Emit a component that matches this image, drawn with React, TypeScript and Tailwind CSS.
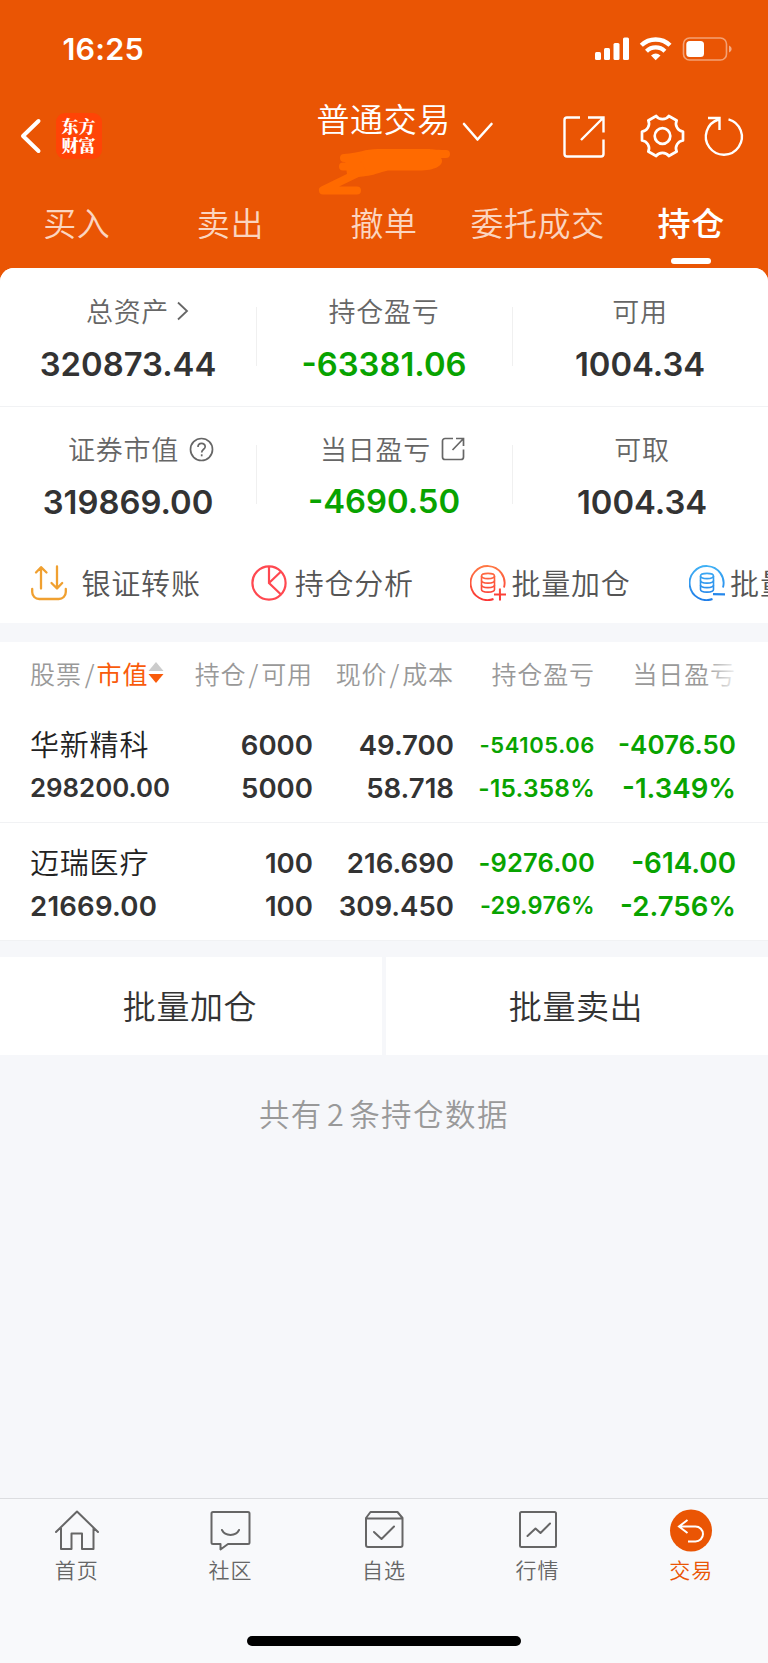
import type { ReactNode } from "react";

const CJK = "font-['Noto_Sans_CJK_SC',sans-serif]";
const NUM = "font-['Inter','Noto_Sans_CJK_SC',sans-serif]";
const LOGO = "font-['Noto_Serif_CJK_SC','Noto_Sans_CJK_SC',sans-serif]";

const tabs = ["买入", "卖出", "撤单", "委托成交", "持仓"];

interface Holding {
    name: string;
    value: string;
    valueClass: string;
    amount: string;
    available: string;
    price: string;
    cost: string;
    profit: string;
    profitRate: string;
    profitClass: string;
    profitRateClass: string;
    dayProfit: string;
    dayRate: string;
    dayProfitClass: string;
}

const holdings: Holding[] = [
    {
        name: "华新精科",
        value: "298200.00",
        valueClass: "text-[25.8px]",
        amount: "6000",
        available: "5000",
        price: "49.700",
        cost: "58.718",
        profit: "-54105.06",
        profitRate: "-15.358%",
        profitClass: "text-[22px] tracking-[0.6px]",
        profitRateClass: "text-[24.5px] tracking-[0.2px]",
        dayProfit: "-4076.50",
        dayRate: "-1.349%",
        dayProfitClass: "text-[26px]",
    },
    {
        name: "迈瑞医疗",
        value: "21669.00",
        valueClass: "text-[27.6px] tracking-[0.2px]",
        amount: "100",
        available: "100",
        price: "216.690",
        cost: "309.450",
        profit: "-9276.00",
        profitRate: "-29.976%",
        profitClass: "text-[25.5px] tracking-[0.2px]",
        profitRateClass: "text-[23.6px] tracking-[0.2px]",
        dayProfit: "-614.00",
        dayRate: "-2.756%",
        dayProfitClass: "text-[27.8px]",
    },
];

function StatusBar() {
    return (
        <div className="flex h-[98px] items-center justify-between pr-[36px] pl-[62.5px] text-white">
            <span className={`${NUM} text-[30.5px] leading-[40px] font-semibold tracking-[0.2px]`}>16:25</span>
            <svg width="137" height="24" viewBox="595 37 137 24" fill="none">
                <rect x="595" y="52" width="6" height="8" rx="1.5" fill="#fff" />
                <rect x="604" y="48" width="6" height="12" rx="1.5" fill="#fff" />
                <rect x="613.5" y="43" width="6" height="17" rx="1.5" fill="#fff" />
                <rect x="623" y="37.5" width="6" height="22.5" rx="1.5" fill="#fff" />
                <path d="M641.3 45.3a20.5 20.5 0 0 1 28.7 0" stroke="#fff" strokeWidth="4.4" />
                <path d="M646.5 51.2a13 13 0 0 1 18.4 0" stroke="#fff" strokeWidth="4.2" />
                <path d="M651 55.5a7.5 7.5 0 0 1 9.5 0L655.7 60.3Z" fill="#fff" />
                <rect x="683.5" y="38" width="43" height="22" rx="6" stroke="#fff" strokeOpacity=".45" strokeWidth="1.6" />
                <rect x="686.3" y="41" width="17.7" height="16" rx="3.5" fill="#fff" />
                <path d="M729 45.5c3.5 1.5 3.5 5.5 0 7Z" fill="#fff" fillOpacity=".5" />
            </svg>
        </div>
    );
}

function NavBar() {
    return (
        <div className="relative flex h-[88px] items-start text-white">
            <svg className="mt-[20px] ml-[20px]" width="22" height="36" viewBox="0 0 22 36" fill="none">
                <path d="M18.5 3L3 18L18.5 33" stroke="#fff" strokeWidth="4" strokeLinecap="round" strokeLinejoin="round" />
            </svg>
            <div className="mt-[15px] ml-[13.5px] flex h-[46px] w-[46px] flex-col items-center justify-center rounded-[9px] bg-[#ff4406] pb-[3px]">
                <span className={`${LOGO} text-[17px] leading-[19px] font-black`}>东方</span>
                <span className={`${LOGO} text-[17px] leading-[19px] font-black`}>财富</span>
            </div>
            <span className={`${CJK} ml-[215px] text-[33px] leading-[40px] font-[350] tracking-[0.6px] whitespace-nowrap`}>普通交易</span>
            <svg className="mt-[23px] ml-[10px]" width="34" height="22" viewBox="0 0 34 22" fill="none">
                <path d="M3 3L16.5 18.5L30.5 3" stroke="#fff" strokeWidth="2.6" strokeLinecap="round" strokeLinejoin="round" />
            </svg>
            <svg className="mt-[14px] ml-auto" width="212" height="48" viewBox="556 112 212 48" fill="none" stroke="#fff" strokeWidth="2.4">
                <path d="M580 117.5H567a2.5 2.5 0 0 0-2.5 2.5V154a2.5 2.5 0 0 0 2.5 2.5H601a2.5 2.500 0 0 0 2.500-2.500V139.500M588 117.500H603.500V132.500M603.500 117.500L581 140" />
                <g transform="translate(662.5 136)" strokeWidth="2.7">
                    <circle r="7.8" />
                    <path
                        d="M-6.3 -20C-3.5 -15.8 3.5 -15.8 6.3 -20L14.2 -15.5C11.9 -10.9 15.4 -4.9 20.5 -4.5L20.5 4.5C15.4 4.9 11.9 10.9 14.2 15.5L6.3 20C3.5 15.8 -3.5 15.8 -6.3 20L-14.2 15.5C-11.9 10.9 -15.4 4.9 -20.5 4.5L-20.5 -4.5C-15.4 -4.9 -11.9 -10.9 -14.2 -15.5Z"
                        strokeLinejoin="round"
                    />
                </g>
                <path d="M728.5 119.3A18 18 0 1 1 718.5 119.5M708 118H719.5V130" />
            </svg>
            {/* highlighter scribble hiding the account number */}
            <svg className="absolute top-[50px] left-[316px]" width="138" height="50" viewBox="316 148 138 50" fill="none">
                <path d="M344 154C360 153 364 149 378 149H428C432 149 434 150 446 150A4 4 0 0 1 446 158H441C445 164 437 170 422 170.5H388C380 172 372 176 366 176C358 177 350 179 347 174Z" fill="#ff6a00" />
                <path d="M344 158H360M343 166.5H360M323 190L362 171M323 190.5H357" stroke="#ff6a00" strokeWidth="8" strokeLinecap="round" />
            </svg>
        </div>
    );
}

function TabBar() {
    return (
        <div className="grid h-[82px] grid-cols-5">
            {tabs.map((tab) => {
                const active = tab === "持仓";
                return (
                    <div key={tab} className="flex flex-col items-center pt-[16px]">
                        <span
                            className={`${CJK} text-[33px] leading-[40px] tracking-[0.6px] whitespace-nowrap ${active ? "font-medium text-white" : "font-[350] text-[#fbd5c0]"}`}
                        >
                            {tab}
                        </span>
                        {active && <span className="mt-[16px] h-[6px] w-[40px] rounded-full bg-white" />}
                    </div>
                );
            })}
        </div>
    );
}

interface StatProps {
    label: string;
    value: string;
    green?: boolean;
    divider?: boolean;
    className?: string;
    valueClass?: string;
    icon?: ReactNode;
}

function Stat({ label, value, green, divider, className = "", valueClass = "mt-[13px]", icon }: StatProps) {
    return (
        <div className="relative flex flex-col items-center">
            <div className={`flex h-[40px] items-center ${className}`}>
                <span className={`${CJK} text-[27px] leading-[40px] font-[350] tracking-[0.7px] whitespace-nowrap text-[#666]`}>{label}</span>
                {icon}
            </div>
            <span className={`${NUM} text-[32.8px] leading-[40px] font-semibold ${valueClass} ${green ? "text-[#08a300]" : "text-[#333]"}`}>{value}</span>
            {divider && <span className="absolute top-[16px] -right-px h-[59px] w-px bg-[#f0f0f0]" />}
        </div>
    );
}

function Summary() {
    return (
        <div>
            <div className="grid h-[139px] grid-cols-3 border-b border-[#f1f2f4] pt-[23px]">
                <Stat
                    label="总资产"
                    value="320873.44"
                    divider
                    className="pl-[20px]"
                    icon={
                        <svg className="ml-[7px]" width="14" height="22" viewBox="0 0 14 22" fill="none">
                            <path d="M2 2.5L11 11L2 19.5" stroke="#666" strokeWidth="1.8" />
                        </svg>
                    }
                />
                <Stat label="持仓盈亏" value="-63381.06" green divider />
                <Stat label="可用" value="1004.34" />
            </div>
            <div className="grid h-[137px] grid-cols-3 pt-[22px]">
                <Stat
                    label="证券市值"
                    value="319869.00"
                    divider
                    className="pl-[26px]"
                    icon={
                        <svg className="ml-[10px]" width="25" height="25" viewBox="0 0 25 25" fill="none" stroke="#666" strokeWidth="1.7">
                            <circle cx="12.5" cy="12.5" r="11" />
                            <path d="M9 10C9 5.3 16.2 5.3 16.2 9.7C16.2 12.3 12.7 12.3 12.7 15.5" />
                            <path d="M12.7 17.3V19.3" />
                        </svg>
                    }
                />
                <Stat
                    label="当日盈亏"
                    value="-4690.50"
                    green
                    divider
                    className="pl-[17px]"
                    valueClass="mt-[12px]"
                    icon={
                        <svg className="ml-[10px]" width="24" height="24" viewBox="0 0 24 24" fill="none" stroke="#666" strokeWidth="1.7">
                            <path d="M12 1.5H4A2.5 2.5 0 0 0 1.5 4V20A2.5 2.5 0 0 0 4 22.5H20A2.5 2.5 0 0 0 22.5 20V12.5M15 1.5H22.5V9M22.5 1.5L11.5 13" />
                        </svg>
                    }
                />
                <Stat label="可取" value="1004.34" className="pl-[4px]" valueClass="mt-[13px] pl-[4px]" />
            </div>
        </div>
    );
}

interface StackIconProps {
    id: string;
    from: string;
    to: string;
    minus?: boolean;
}

function StackIcon({ id, from, to, minus }: StackIconProps) {
    return (
        <svg className="shrink-0" width="36" height="36" viewBox="0 0 36 36" fill="none" stroke={`url(#${id})`} strokeWidth="1.9">
            <defs>
                <linearGradient id={id} gradientUnits="userSpaceOnUse" x1="0" y1="0" x2="0" y2="36">
                    <stop stopColor={from} />
                    <stop offset="1" stopColor={to} />
                </linearGradient>
            </defs>
            <path d="M23.5 34A17 17 0 1 1 34 22.5" />
            <path d="M11.5 11V24.5C11.5 28 24.5 28 24.5 24.5V11" strokeWidth="1.6" />
            <ellipse cx="18" cy="11" rx="6.5" ry="2.6" strokeWidth="1.6" />
            <path d="M11.5 15.5C11.5 19 24.5 19 24.5 15.5M11.5 20C11.5 23.5 24.5 23.5 24.5 20" strokeWidth="1.6" />
            {minus ? <path d="M24 29.2L36 29.3" strokeWidth="2.2" /> : <path d="M24 29.5L36 29.6M29.9 23.5L30 35.5" strokeWidth="2" />}
        </svg>
    );
}

function ActionLabel({ children, className }: { children: ReactNode; className: string }) {
    return <span className={`${CJK} -mt-[2px] shrink-0 text-[29px] leading-[40px] font-[350] tracking-[0.8px] whitespace-nowrap text-[#555] ${className}`}>{children}</span>;
}

function Actions() {
    return (
        <div className="flex h-[79px] items-center overflow-hidden pb-[2px] pl-[31px]">
            <svg className="shrink-0" width="36" height="36" viewBox="0 0 36 36" fill="none" stroke="#f0a030" strokeWidth="2.3" strokeLinecap="round">
                <path d="M1.2 24V27A7 7 0 0 0 8.2 34H27.8A7 7 0 0 0 34.8 27V24" />
                <path d="M10 23.5V2.5M5 7.5L10 2.2L15.5 7.5M26 1.5V23M20.5 18L26 23.5L31.2 18" strokeLinejoin="round" />
            </svg>
            <ActionLabel className="ml-[14.5px]">银证转账</ActionLabel>
            <svg className="ml-[50px] shrink-0" width="36" height="36" viewBox="0 0 36 36" fill="none" stroke="#ff4850" strokeWidth="2.2">
                <circle cx="18" cy="18" r="16.6" />
                <path d="M18 1.5V18L30 29.5M18 18L29.8 6.8" />
            </svg>
            <ActionLabel className="ml-[8px]">持仓分析</ActionLabel>
            <span className="ml-[56.5px] flex shrink-0 items-center">
                <StackIcon id="stack-add" from="#ff7a45" to="#fb3434" />
                <ActionLabel className="ml-[5px]">批量加仓</ActionLabel>
            </span>
            <span className="ml-[58.5px] flex shrink-0 items-center">
                <StackIcon id="stack-sub" from="#41b2f5" to="#1f7de8" minus />
                <ActionLabel className="ml-[5px]">批量卖出</ActionLabel>
            </span>
        </div>
    );
}

const columns = "grid grid-cols-[146px_137px_141px_141px_141px] pl-[30px]";

function TableHead() {
    return (
        <div className={`${columns} ${CJK} relative h-[63px] pt-[11px] text-right text-[25px] leading-[40px] font-[350] tracking-[0.9px] whitespace-nowrap text-[#999]`}>
            <div className="flex h-[40px] items-center">
                <span>股票</span>
                <span className="ml-[3px]">/</span>
                <span className="ml-px font-normal text-[#f95b0b]">市值</span>
                <svg className="shrink-0" width="16" height="22" viewBox="0 0 16 22">
                    <path d="M8 0L15.5 9H0.5Z" fill="#ccc" />
                    <path d="M0.5 12H15.5L8 21Z" fill="#f95b0b" />
                </svg>
            </div>
            <span>
                持仓<span className="mx-[2px]">/</span>可用
            </span>
            <span>
                现价<span className="mx-[2px]">/</span>成本
            </span>
            <span>持仓盈亏</span>
            <span>当日盈亏</span>
            <span className="absolute top-0 left-[705px] h-full w-[36px] bg-linear-to-r from-white/0 to-white" />
        </div>
    );
}

function HoldingRow({ item }: { item: Holding }) {
    return (
        <div className={`${columns} ${NUM} h-[118px] border-b border-[#f1f2f4] pt-[19px] text-right text-[27.6px] leading-[42.5px] font-semibold whitespace-nowrap text-[#333]`}>
            <div className="flex flex-col text-left">
                <span className={`${CJK} -mt-[2px] mb-[2px] text-[29px] font-[350] tracking-[0.8px] text-[#222]`}>{item.name}</span>
                <span className={item.valueClass}>{item.value}</span>
            </div>
            <div className="flex flex-col">
                <span>{item.amount}</span>
                <span>{item.available}</span>
            </div>
            <div className="flex flex-col">
                <span>{item.price}</span>
                <span>{item.cost}</span>
            </div>
            <div className="flex flex-col text-[#08a300]">
                <span className={item.profitClass}>{item.profit}</span>
                <span className={item.profitRateClass}>{item.profitRate}</span>
            </div>
            <div className="flex flex-col text-[#08a300]">
                <span className={item.dayProfitClass}>{item.dayProfit}</span>
                <span>{item.dayRate}</span>
            </div>
        </div>
    );
}

const navItems = [
    {
        label: "首页",
        icon: <path d="M2 24L23 3.5L44 24M7 20V41H17.5V25.5H28V41H39.5V20" />,
    },
    {
        label: "社区",
        icon: <path d="M6 4H41A1.5 1.5 0 0 1 42.5 5.5V34.5A1.5 1.5 0 0 1 41 36H21L13.5 41.5V36H6A1.5 1.5 0 0 1 4.5 34.5V5.5A1.5 1.5 0 0 1 6 4ZM15 22C18 28.5 29 28.5 32 22" />,
    },
    {
        label: "自选",
        icon: <path d="M9.5 4H36.5L41.5 10V37A2 2 0 0 1 39.5 39H7A2 2 0 0 1 5 37V10ZM5 10.5H41.5M13 24L20.5 31L33 18.5" />,
    },
    {
        label: "行情",
        icon: <path d="M6.5 4H39.5A1.5 1.5 0 0 1 41 5.5V37.5A1.5 1.5 0 0 1 39.5 39H6.5A1.5 1.5 0 0 1 5 37.5V5.5A1.5 1.5 0 0 1 6.5 4ZM12.5 28L20.5 20.5L25.5 25L35 15.5" />,
    },
];

function BottomNav() {
    return (
        <div className="h-[165px] border-t border-[#dcdde0] bg-[#f8f9fb]">
            <div className="grid grid-cols-5 pt-[8.5px]">
                {navItems.map((item) => (
                    <div key={item.label} className="flex flex-col items-center">
                        <svg width="46" height="46" viewBox="0 0 46 46" fill="none" stroke="#666" strokeWidth="2" strokeLinejoin="round" strokeLinecap="round">
                            {item.icon}
                        </svg>
                        <span className={`${CJK} -mt-px text-[21px] leading-[32px] font-[350] tracking-[1px] text-[#666]`}>{item.label}</span>
                    </div>
                ))}
                <div className="flex flex-col items-center">
                    <svg width="46" height="46" viewBox="0 0 46 46" fill="none">
                        <circle cx="23" cy="22.5" r="21" fill="#ea5504" />
                        <path d="M19.5 12L11 18.5L19.5 25M11 18.5H27.5A7.5 7.5 0 0 1 27.5 33.5H20" stroke="#fff" strokeWidth="2" />
                    </svg>
                    <span className={`${CJK} -mt-px text-[21px] leading-[32px] font-[350] tracking-[1px] text-[#ea5504]`}>交易</span>
                </div>
            </div>
            <div className="mx-auto mt-[51px] h-[10px] w-[274px] rounded-full bg-black" />
        </div>
    );
}

export default function App() {
    return (
        <div className="flex h-[1663px] w-[768px] flex-col overflow-hidden bg-[#f6f7fa]">
            <div className="bg-[#ea5504]">
                <StatusBar />
                <NavBar />
                <TabBar />
                <div className="h-[14px] rounded-t-[14px] bg-white" />
            </div>
            <div className="-mt-[14px] rounded-t-[14px] bg-white">
                <Summary />
                <Actions />
            </div>
            <div className="mt-[19px] bg-white">
                <TableHead />
                {holdings.map((item) => (
                    <HoldingRow key={item.name} item={item} />
                ))}
            </div>
            <div className={`${CJK} mt-[16px] grid grid-cols-2 gap-[4px] text-center text-[33px] leading-[97px] font-[350] tracking-[0.6px] text-[#333]`}>
                <span className="bg-white pr-[2px] pb-px">批量加仓</span>
                <span className="bg-white pr-[2px] pb-px">批量卖出</span>
            </div>
            <div className={`${CJK} mt-[38px] text-center text-[30.5px] leading-[40px] font-[350] tracking-[1.5px] text-[#999]`}>
                共有<span className="mx-[4px]">2</span>条持仓数据
            </div>
            <div className="mt-auto">
                <BottomNav />
            </div>
        </div>
    );
}
